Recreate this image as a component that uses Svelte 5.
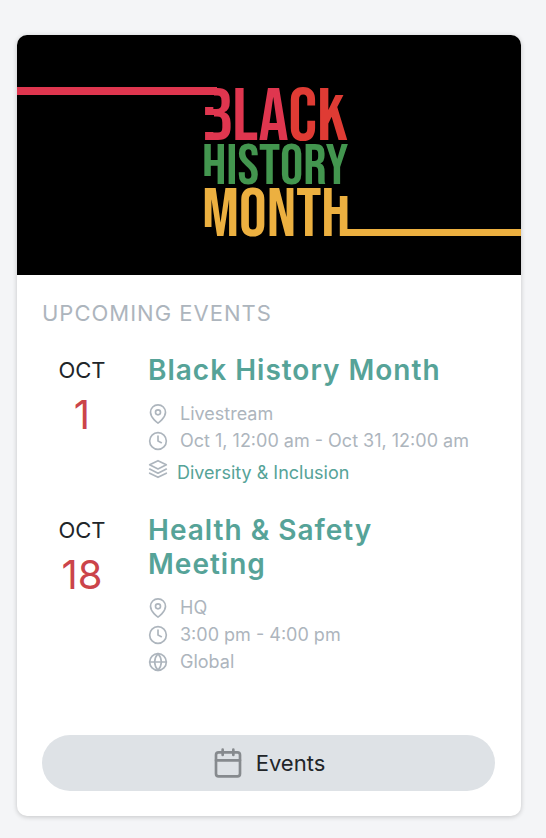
<script>
  const events = [
    {
      month: 'OCT',
      day: '1',
      title: 'Black History Month',
      details: [
        { icon: 'pin', text: 'Livestream' },
        { icon: 'clock', text: 'Oct 1, 12:00 am - Oct 31, 12:00 am' },
        { icon: 'layers', text: 'Diversity & Inclusion', link: true }
      ]
    },
    {
      month: 'OCT',
      day: '18',
      title: 'Health & Safety Meeting',
      details: [
        { icon: 'pin', text: 'HQ' },
        { icon: 'clock', text: '3:00 pm - 4:00 pm' },
        { icon: 'globe', text: 'Global' }
      ]
    }
  ];
</script>

{#snippet icon(name)}
  <svg class="icon" viewBox="0 0 24 24" aria-hidden="true">
    {#if name === 'pin'}
      <path d="M21 10c0 7-9 13-9 13s-9-6-9-13a9 9 0 0 1 18 0z" />
      <circle cx="12" cy="10" r="3" />
    {:else if name === 'clock'}
      <circle cx="12" cy="12" r="10" />
      <path d="M12 6v6l4 2" />
    {:else if name === 'layers'}
      <path d="M12 2 2 7l10 5 10-5-10-5z" />
      <path d="M2 17l10 5 10-5" />
      <path d="M2 12l10 5 10-5" />
    {:else if name === 'globe'}
      <circle cx="12" cy="12" r="10" />
      <path d="M2 12h20" />
      <path d="M12 2a15.3 15.3 0 0 1 4 10 15.3 15.3 0 0 1-4 10 15.3 15.3 0 0 1-4-10 15.3 15.3 0 0 1 4-10z" />
    {:else}
      <rect x="3" y="4" width="18" height="18" rx="2" />
      <path d="M16 2v4M8 2v4M3 10h18" />
    {/if}
  </svg>
{/snippet}

<div class="previous"></div>
<main class="card">
  <svg class="banner" viewBox="0 0 504 240" role="img" aria-label="Black History Month">
    <text class="red" x="185" y="105" font-size="75">BLA<tspan class="orange">CK</tspan></text>
    <text class="green" x="185" y="149" font-size="58">HISTORY</text>
    <text class="gold" x="185" y="201" font-size="69">MONTH</text>
    <!-- notches that open the letters towards the ribbons -->
    <path d="M184 60h13v12h-13zM184 80h13v17h-13zM184 141h11v9h-11zM184 192h11v10h-11zM322 151h12v10h-12zM315 50h18v10h-18z" />
    <rect class="red" x="-500" y="52" width="700" height="8" />
    <rect class="gold" x="324" y="194" width="680" height="7" />
  </svg>

  <div class="body">
    <h2>UPCOMING EVENTS</h2>

    <div class="events">
      {#each events as event}
        <article>
          <div class="date">
            <div class="month">{event.month}</div>
            <div class="day">{event.day}</div>
          </div>
          <div class="info">
            <h3><a href="#event">{event.title}</a></h3>
            <ul>
              {#each event.details as detail}
                <li class:category={detail.link}>
                  {@render icon(detail.icon)}
                  {#if detail.link}
                    <a href="#category">{detail.text}</a>
                  {:else}
                    <span>{detail.text}</span>
                  {/if}
                </li>
              {/each}
            </ul>
          </div>
        </article>
      {/each}
    </div>

    <button type="button">
      {@render icon('calendar')}
      Events
    </button>
  </div>
</main>

<style>
  :global(body) {
    background: #f4f5f7;
    font-family: Inter, 'Liberation Sans', sans-serif;
    color: #212529;
  }

  .previous {
    margin: 0 25px 35px 17px;
    box-shadow: 0 1px 3px rgba(0, 0, 0, 0.12);
  }

  .card {
    margin: 0 25px 22px 17px;
    background: #fff;
    border-radius: 10px;
    box-shadow: 0 1px 5px rgba(0, 0, 0, 0.2);
    overflow: hidden;
  }

  .banner {
    display: block;
    width: 100%;
    height: 240px;
    background: #000;
    font-family: 'Bebas Neue', Roboto, sans-serif;
    font-weight: 400;
  }

  .red { fill: #df364f; }
  .orange { fill: #df3b34; }
  .green { fill: #43964f; }
  .gold { fill: #ecb040; }

  .body {
    padding: 24px 26px 25px 25px;
  }

  h2 {
    margin: 0 0 26px;
    font-size: 22px;
    line-height: 28px;
    font-weight: 400;
    letter-spacing: 1px;
    color: #adb5bd;
  }

  .events {
    display: grid;
    gap: 27px;
  }

  article {
    display: grid;
    grid-template-columns: 80px 1fr;
    gap: 26px;
  }

  .date {
    text-align: center;
  }

  .month {
    font-size: 22px;
    line-height: 34px;
  }

  .day {
    margin-top: 4px;
    font-size: 40px;
    line-height: 48px;
    color: #cb444a;
  }

  h3 {
    margin: 0 0 13px;
    font-size: 28px;
    line-height: 34px;
    font-weight: 600;
    letter-spacing: 1px;
  }

  a {
    color: #56a398;
    text-decoration: none;
  }

  ul {
    margin: 0;
    padding: 0;
    list-style: none;
    font-size: 18px;
    line-height: 27px;
    color: #adb5bd;
  }

  li {
    display: flex;
    align-items: center;
    gap: 12px;
  }

  .category {
    margin-top: 5px;
    gap: 9px;
    align-items: flex-start;
  }

  .icon {
    flex: none;
    width: 20px;
    height: 20px;
    fill: none;
    stroke: currentColor;
    stroke-width: 2;
    stroke-linecap: round;
    stroke-linejoin: round;
  }

  button {
    display: flex;
    align-items: center;
    justify-content: center;
    gap: 12px;
    width: 100%;
    height: 56px;
    margin-top: 60px;
    border: 0;
    border-radius: 28px;
    background: #dee2e6;
    color: inherit;
    font: inherit;
    font-size: 22px;
  }

  button .icon {
    width: 32px;
    height: 32px;
    color: #868a8e;
  }
</style>
